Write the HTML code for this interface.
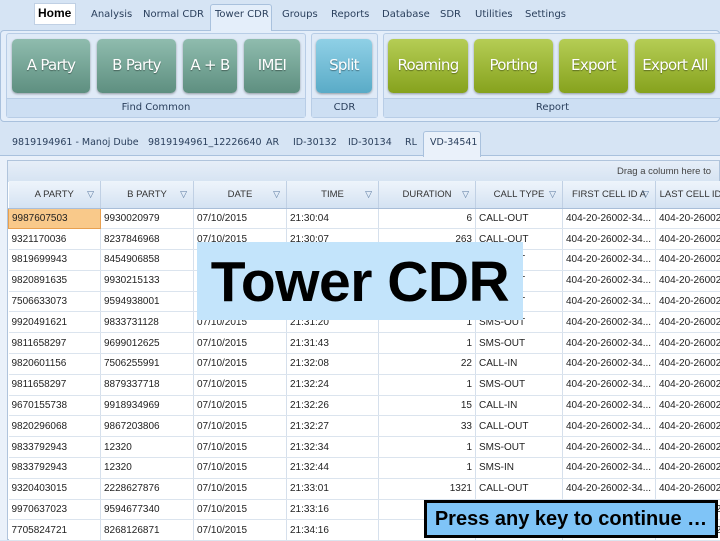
<!DOCTYPE html>
<html><head><meta charset="utf-8"><style>
*{margin:0;padding:0;box-sizing:border-box}
body{width:720px;height:540px;overflow:hidden;background:#d6e4f4;font-family:"DejaVu Sans","Liberation Sans",sans-serif;position:relative}
.a{position:absolute}
.menu{font-size:10px;color:#2a3f5c;top:9px}
.rib{top:30px;left:0;width:720px;height:92px;background:#e4eefa;border:1px solid #a9c1dd;border-radius:4px}
.grp{top:33px;height:85px;background:#dfeaf7;border:1px solid #b8cde6;border-radius:3px}
.lbl{height:19px;top:64px;left:0;right:0;position:absolute;background:#cddff3;border-top:1px solid #b8cde6;font-size:10px;color:#2a3f5c;text-align:center;line-height:18px}
.btn{top:39px;height:54px;border-radius:5px;color:#fff;font-size:15px;text-align:center;line-height:52px;text-shadow:0 1px 1px rgba(0,0,0,.4);box-shadow:0 1px 2px rgba(0,0,0,.35);font-family:"DejaVu Sans",sans-serif;letter-spacing:-.7px}
.g{background:linear-gradient(#8fbcae,#5e8f80)}
.b{background:linear-gradient(#8fd0e6,#5aabc7)}
.o{background:linear-gradient(#b5cd55,#86a21d)}
.tab2{top:137px;font-size:9.5px;color:#2a3f5c;white-space:nowrap}
table{border-collapse:collapse;position:absolute;left:8px;top:181px;width:717px;table-layout:fixed;font-size:10px;color:#222;font-family:"Liberation Sans",sans-serif}
th{height:27px;background:linear-gradient(#eef4fb,#d4e2f2);border-right:1px solid #c0d0e4;border-bottom:1px solid #a9bed8;font-weight:normal;font-size:9.5px;color:#333;text-align:center;position:relative;white-space:nowrap;overflow:hidden}
th span{position:absolute;right:6px;top:8px;color:#5a7aa0;font-size:9px}
td{height:20.8px;border-right:1px solid #d6e0ec;border-bottom:1px solid #dbe4ee;padding:0 3px;white-space:nowrap;overflow:hidden;background:#fff}
td.r{text-align:right}
</style></head><body>
<div class="a" style="left:34px;top:3px;width:42px;height:22px;background:#fff;border:1px solid #c0d0e4"></div>
<div class="a" style="left:38px;top:6px;font-size:12px;font-weight:bold;color:#000;font-family:'Liberation Sans',sans-serif">Home</div>
<div class="a menu" style="left:91px">Analysis</div>
<div class="a menu" style="left:143px">Normal CDR</div>
<div class="a" style="left:210px;top:4px;width:62px;height:27px;background:#e4eefa;border:1px solid #a9c1dd;border-bottom:none;border-radius:3px 3px 0 0;z-index:2"></div>
<div class="a menu" style="left:215px;z-index:3">Tower CDR</div>
<div class="a menu" style="left:282px">Groups</div>
<div class="a menu" style="left:331px">Reports</div>
<div class="a menu" style="left:382px">Database</div>
<div class="a menu" style="left:440px">SDR</div>
<div class="a menu" style="left:475px">Utilities</div>
<div class="a menu" style="left:525px">Settings</div>
<div class="a rib"></div>
<div class="a grp" style="left:6px;width:300px"><div class="lbl">Find Common</div></div>
<div class="a grp" style="left:311px;width:67px"><div class="lbl">CDR</div></div>
<div class="a grp" style="left:383px;width:340px"><div class="lbl" style="width:337px">Report</div></div>
<div class="a btn g" style="left:12px;width:78px">A Party</div>
<div class="a btn g" style="left:97px;width:79px">B Party</div>
<div class="a btn g" style="left:183px;width:54px">A + B</div>
<div class="a btn g" style="left:244px;width:56px">IMEI</div>
<div class="a btn b" style="left:316px;width:56px">Split</div>
<div class="a btn o" style="left:388px;width:80px">Roaming</div>
<div class="a btn o" style="left:474px;width:79px">Porting</div>
<div class="a btn o" style="left:559px;width:69px">Export</div>
<div class="a btn o" style="left:635px;width:80px">Export All</div>
<div class="a" style="left:0;top:155px;width:720px;height:385px;background:#eaf1fa;border-top:1px solid #a9c1dd"></div>
<div class="a tab2" style="left:12px">9819194961 - Manoj Dube</div>
<div class="a tab2" style="left:148px">9819194961_12226640</div>
<div class="a tab2" style="left:266px">AR</div>
<div class="a tab2" style="left:293px">ID-30132</div>
<div class="a tab2" style="left:348px">ID-30134</div>
<div class="a tab2" style="left:405px">RL</div>
<div class="a" style="left:423px;top:131px;width:58px;height:26px;background:#eaf1fa;border:1px solid #a9c1dd;border-bottom:none;border-radius:3px 3px 0 0"></div>
<div class="a tab2" style="left:430px">VD-34541</div>
<div class="a" style="left:7px;top:160px;width:713px;height:380px;border:1px solid #b0c4dc;background:linear-gradient(#e6eef8,#d6e3f2 21px,#fff 21px)"></div>
<div class="a" style="left:617px;top:166px;font-size:9.5px;color:#444;white-space:nowrap;font-family:'Liberation Sans',sans-serif">Drag a column here to</div>
<table>
<colgroup><col style="width:92px"><col style="width:93px"><col style="width:93px"><col style="width:92px"><col style="width:97px"><col style="width:87px"><col style="width:93px"><col style="width:70px"></colgroup>
<tr><th>A PARTY<span>▽</span></th><th>B PARTY<span>▽</span></th><th>DATE<span>▽</span></th><th>TIME<span>▽</span></th><th>DURATION<span>▽</span></th><th>CALL TYPE<span>▽</span></th><th>FIRST CELL ID A<span>▽</span></th><th>LAST CELL ID</th></tr>
<tr><td style="background:#f9c98a;border:1px solid #e8a050">9987607503</td><td>9930020979</td><td>07/10/2015</td><td>21:30:04</td><td class="r">6</td><td>CALL-OUT</td><td>404-20-26002-34...</td><td>404-20-26002</td></tr>
<tr><td>9321170036</td><td>8237846968</td><td>07/10/2015</td><td>21:30:07</td><td class="r">263</td><td>CALL-OUT</td><td>404-20-26002-34...</td><td>404-20-26002</td></tr>
<tr><td>9819699943</td><td>8454906858</td><td>07/10/2015</td><td>21:30:20</td><td class="r">1</td><td>SMS-OUT</td><td>404-20-26002-34...</td><td>404-20-26002</td></tr>
<tr><td>9820891635</td><td>9930215133</td><td>07/10/2015</td><td>21:30:45</td><td class="r">1</td><td>SMS-OUT</td><td>404-20-26002-34...</td><td>404-20-26002</td></tr>
<tr><td>7506633073</td><td>9594938001</td><td>07/10/2015</td><td>21:31:02</td><td class="r">1</td><td>SMS-OUT</td><td>404-20-26002-34...</td><td>404-20-26002</td></tr>
<tr><td>9920491621</td><td>9833731128</td><td>07/10/2015</td><td>21:31:20</td><td class="r">1</td><td>SMS-OUT</td><td>404-20-26002-34...</td><td>404-20-26002</td></tr>
<tr><td>9811658297</td><td>9699012625</td><td>07/10/2015</td><td>21:31:43</td><td class="r">1</td><td>SMS-OUT</td><td>404-20-26002-34...</td><td>404-20-26002</td></tr>
<tr><td>9820601156</td><td>7506255991</td><td>07/10/2015</td><td>21:32:08</td><td class="r">22</td><td>CALL-IN</td><td>404-20-26002-34...</td><td>404-20-26002</td></tr>
<tr><td>9811658297</td><td>8879337718</td><td>07/10/2015</td><td>21:32:24</td><td class="r">1</td><td>SMS-OUT</td><td>404-20-26002-34...</td><td>404-20-26002</td></tr>
<tr><td>9670155738</td><td>9918934969</td><td>07/10/2015</td><td>21:32:26</td><td class="r">15</td><td>CALL-IN</td><td>404-20-26002-34...</td><td>404-20-26002</td></tr>
<tr><td>9820296068</td><td>9867203806</td><td>07/10/2015</td><td>21:32:27</td><td class="r">33</td><td>CALL-OUT</td><td>404-20-26002-34...</td><td>404-20-26002</td></tr>
<tr><td>9833792943</td><td>12320</td><td>07/10/2015</td><td>21:32:34</td><td class="r">1</td><td>SMS-OUT</td><td>404-20-26002-34...</td><td>404-20-26002</td></tr>
<tr><td>9833792943</td><td>12320</td><td>07/10/2015</td><td>21:32:44</td><td class="r">1</td><td>SMS-IN</td><td>404-20-26002-34...</td><td>404-20-26002</td></tr>
<tr><td>9320403015</td><td>2228627876</td><td>07/10/2015</td><td>21:33:01</td><td class="r">1321</td><td>CALL-OUT</td><td>404-20-26002-34...</td><td>404-20-26002</td></tr>
<tr><td>9970637023</td><td>9594677340</td><td>07/10/2015</td><td>21:33:16</td><td class="r">1</td><td>SMS-OUT</td><td>404-20-26002-34...</td><td>404-20-26002</td></tr>
<tr><td>7705824721</td><td>8268126871</td><td>07/10/2015</td><td>21:34:16</td><td class="r">1</td><td>SMS-OUT</td><td>404-20-26002-34...</td><td>404-20-26002</td></tr>
</table>
<div class="a" style="left:197px;top:242px;width:326px;height:78px;background:#c3e4fb;font-family:'Liberation Sans',sans-serif;font-size:57px;font-weight:bold;line-height:80px;text-align:center;color:#000;letter-spacing:-0.5px">Tower CDR</div>
<div class="a" style="left:424px;top:500px;width:294px;height:38px;background:#7fc4f7;border:3px solid #000;font-family:'Liberation Sans',sans-serif;font-size:20px;font-weight:bold;line-height:32px;text-align:center;color:#000">Press any key to continue …</div>
</body></html>
